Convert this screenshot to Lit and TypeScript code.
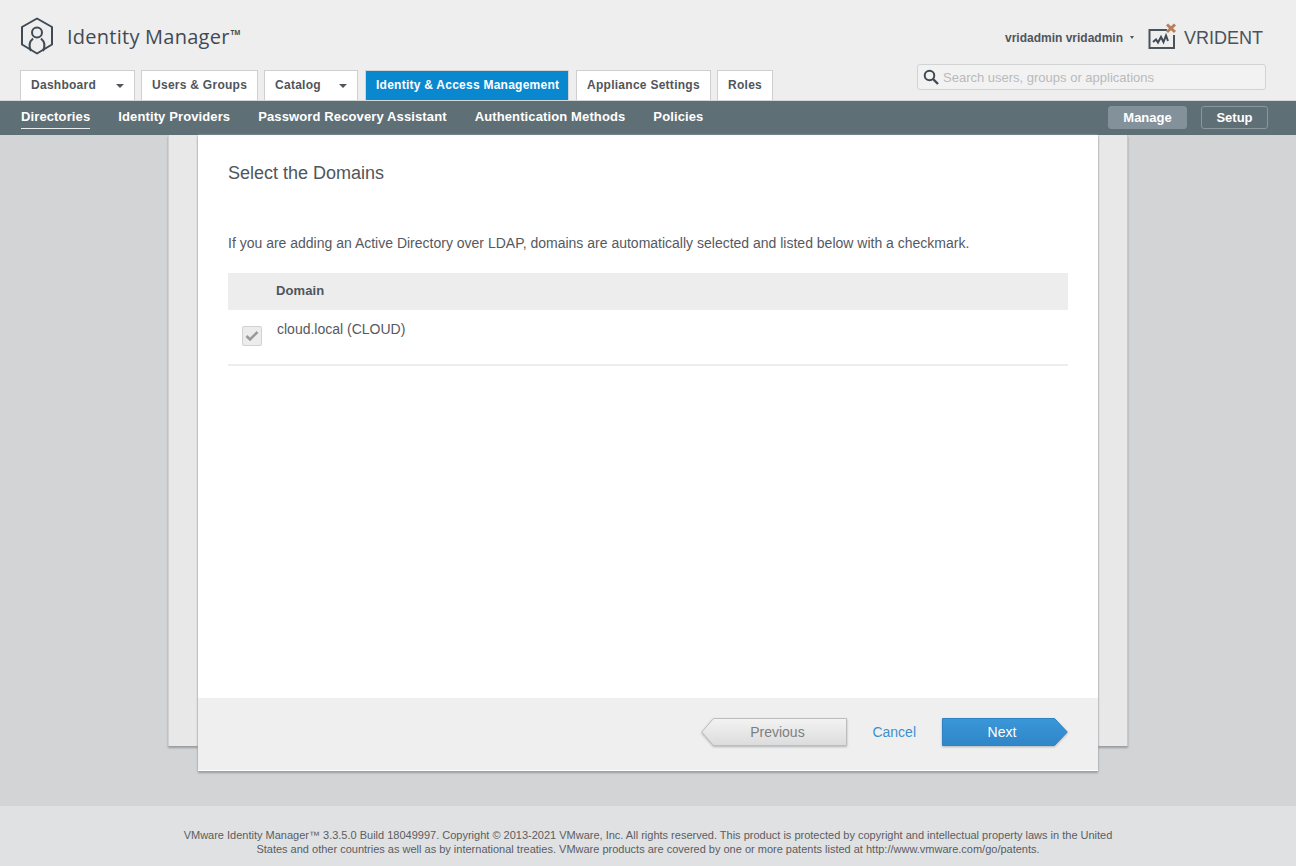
import { LitElement, html, css } from "lit";
import { customElement } from "lit/decorators.js";

@customElement("app-root")
export class AppRoot extends LitElement {
  static styles = css`
    :host { display: block; width: 1296px; height: 866px; overflow: hidden; font-family: "Liberation Sans", Arial, sans-serif; color: #4a4f57; background: #d3d4d6; }
    * { box-sizing: border-box; }
    .page { display: flex; flex-direction: column; height: 866px; }
    .header { height: 101px; flex: none; background: #eee; border-bottom: 1px solid #d4d6d7; display: flex; justify-content: space-between; padding: 0 30px 0 20px; }
    .left { display: flex; flex-direction: column; }
    .brand { height: 70px; display: flex; align-items: flex-start; padding-top: 17px; gap: 13px; }
    .brand svg { display: block; }
    .brand-name { font-family: "Open Sans", sans-serif; font-size: 20px; line-height: 38px; margin-top: 1px; color: #3f4a54; letter-spacing: 0.25px; font-weight: 400; }
    .brand-name sup { font-size: 6.5px; line-height: 0; vertical-align: 9px; letter-spacing: 0; font-weight: 700; margin-left: 1px; }
    .tabs { display: grid; grid-template-columns: 115px 117px 94px 206px 135px 56px; gap: 6px; }
    .tab { height: 30px; border: 1px solid #cfcfcf; border-bottom: none; background: #fff; display: flex; align-items: center; padding: 0 10px 1px; font-size: 12px; font-weight: bold; letter-spacing: 0.27px; color: #50555c; white-space: nowrap; }
    .tab.active { background: #0a88cf; border-color: #d0d4d6; color: #fff; letter-spacing: 0.25px; margin: 0 1px; }
    .caret { width: 0; height: 0; border-left: 4px solid transparent; border-right: 4px solid transparent; border-top: 4px solid #50555c; margin-left: auto; margin-top: 1px; }
    .right { display: flex; flex-direction: column; align-items: flex-end; width: 349px; }
    .user { height: 64px; display: flex; align-items: flex-start; padding-top: 21px; margin-right: 3px; }
    .user-name { font-size: 12px; font-weight: bold; color: #50555c; line-height: 34px; }
    .mini { width: 0; height: 0; border-left: 2.5px solid transparent; border-right: 2.5px solid transparent; border-top: 3px solid #50555c; margin: 15px 14px 0 7px; }
    .user svg { margin-top: 1px; }
    .vrident { font-size: 18px; line-height: 34px; color: #4a525b; margin-left: 7px; }
    .search { width: 349px; height: 26px; border: 1px solid #d2d3d4; border-radius: 3px; background: #f2f2f2; display: flex; align-items: center; padding-left: 5px; gap: 4px; font-size: 13px; color: #b9babb; }
    .subnav { height: 34px; flex: none; background: #5f6f76; display: flex; justify-content: space-between; align-items: center; padding: 0 28px 1px 21px; }
    .links { display: flex; gap: 28px; }
    .link { font-size: 13px; font-weight: bold; letter-spacing: 0.12px; color: #fff; line-height: 16px; padding-bottom: 3px; border-bottom: 1px solid transparent; margin-top: 3px; }
    .link.on { border-bottom-color: #e8ecee; }
    .subbtns { display: flex; gap: 14px; }
    .sb { height: 23px; border: 1px solid #8a989e; border-radius: 3px; color: #fff; font-size: 13px; font-weight: bold; display: flex; align-items: center; justify-content: center; }
    .sb.m { width: 79px; background: #83929a; border-color: #83929a; }
    .sb.s { width: 67px; }
    .main { flex: 1; display: grid; grid-template: 1fr / 1fr; min-height: 0; }
    .back { grid-area: 1 / 1; margin: 0 168px; height: 611px; background: #e8e8e8; border-left: 1px solid #cfd0d2; border-right: 1px solid #c6c7c9; box-shadow: 0 2px 2px #9a9ca0; }
    .modal { grid-area: 1 / 1; margin: 0 198px; height: 636px; padding-bottom: 1px; background: #fff; box-shadow: 0 0 2px #a5a7aa, 0 2px 2px #9a9ca0; display: flex; flex-direction: column; }
    .body { flex: 1; padding: 0 30px; display: flex; flex-direction: column; }
    h2 { margin: 28px 0 0; font-size: 18px; line-height: 20px; font-weight: normal; color: #50555c; }
    .desc { margin: 51px 0 0; font-size: 14px; line-height: 18px; color: #55595f; }
    .thead { margin-top: 21px; height: 37px; background: #ededed; display: flex; align-items: center; padding: 0 0 3px 48px; font-size: 13px; font-weight: bold; color: #50555c; letter-spacing: 0.1px; }
    .row { height: 56px; border-bottom: 2px solid #ededed; display: flex; align-items: flex-start; padding-left: 14px; gap: 15px; }
    .check { width: 20px; height: 20px; margin-top: 16px; border: 1px solid #d2d2d2; border-radius: 2px; background: #ececec; display: flex; align-items: center; justify-content: center; }
    .row span { font-size: 14px; line-height: 18px; margin-top: 10px; color: #55595f; }
    .foot { height: 72px; flex: none; background: #efefef; display: flex; justify-content: flex-end; align-items: flex-start; padding: 20px 30px 0 0; }
    .arrow { display: grid; height: 28px; font-size: 14px; }
    .arrow > * { grid-area: 1 / 1; }
    .arrow svg { overflow: visible; filter: drop-shadow(0 1px 1px #b0b2b4); }
    .arrow span { z-index: 1; display: flex; align-items: center; justify-content: center; }
    .prev { width: 146px; color: #7d7f80; margin-right: 25px; }
    .prev span { padding-left: 6px; }
    .next { width: 126px; color: #fff; margin-left: 26px; }
    .next span { padding-right: 6px; }
    .cancel { font-size: 14px; line-height: 28px; color: #3e8fcb; }
    .footer { height: 60px; flex: none; background: #e0e1e2; text-align: center; padding-top: 22px; font-size: 11px; line-height: 14px; color: #5a5d62; }
    .footer div { width: 940px; margin: 0 auto; }
  `;

  render() {
    const links = ["Directories", "Identity Providers", "Password Recovery Assistant", "Authentication Methods", "Policies"];
    return html`<div class="page">
      <div class="header">
        <div class="left">
          <div class="brand">
            <svg width="34" height="38" viewBox="0 0 34 38" fill="none" stroke="#3f4a54" stroke-width="2">
              <path d="M17 1.500 32 10V27.500L17 36.500 2 27.500V10Z" stroke-linejoin="round"/>
              <circle cx="17" cy="15.500" r="5"/>
              <path d="M11 34C9 30 9 25 13 21.500M21 21.500C25 25 25 30 23 34"/>
            </svg>
            <div class="brand-name">Identity Manager<sup>TM</sup></div>
          </div>
          <div class="tabs">
            <div class="tab">Dashboard<i class="caret"></i></div>
            <div class="tab">Users &amp; Groups</div>
            <div class="tab">Catalog<i class="caret"></i></div>
            <div class="tab active">Identity &amp; Access Management</div>
            <div class="tab">Appliance Settings</div>
            <div class="tab">Roles</div>
          </div>
        </div>
        <div class="right">
          <div class="user">
            <span class="user-name">vridadmin vridadmin</span><i class="mini"></i>
            <svg width="29" height="28" viewBox="0 0 29 28" fill="none">
              <path d="M19 8H1.500V26H26V13" stroke="#4a525b" stroke-width="2"/>
              <path d="M5 20 8 17.500 10 20.500 13 15 15.500 20 18 13.500 20 19" stroke="#3f4a54" stroke-width="2"/>
              <path d="M19 2.500 27 10M27 2.500 19 10" stroke="#b77f5e" stroke-width="3"/>
            </svg>
            <span class="vrident">VRIDENT</span>
          </div>
          <div class="search">
            <svg width="16" height="16" viewBox="0 0 16 16" fill="none" stroke="#3f4a54" stroke-width="2"><circle cx="6.500" cy="6.500" r="4.800"/><path d="M10 10 15 15" stroke-width="2.400"/></svg>
            <span>Search users, groups or applications</span>
          </div>
        </div>
      </div>
      <div class="subnav">
        <div class="links">${links.map((l, i) => html`<div class="link ${i === 0 ? "on" : ""}">${l}</div>`)}</div>
        <div class="subbtns"><div class="sb m">Manage</div><div class="sb s">Setup</div></div>
      </div>
      <div class="main">
        <div class="back"></div>
        <div class="modal">
          <div class="body">
            <h2>Select the Domains</h2>
            <p class="desc">If you are adding an Active Directory over LDAP, domains are automatically selected and listed below with a checkmark.</p>
            <div class="thead">Domain</div>
            <div class="row">
              <div class="check"><svg width="14" height="12" viewBox="0 0 14 12" fill="none" stroke="#9a9a9a" stroke-width="2.600"><path d="M1.500 6 5 9.500 12.500 2"/></svg></div>
              <span>cloud.local (CLOUD)</span>
            </div>
          </div>
          <div class="foot">
            <div class="arrow prev">
              <svg width="146" height="28" viewBox="0 0 146 28">
                <defs><linearGradient id="pg" x1="0" y1="0" x2="0" y2="1"><stop offset="0" stop-color="#f3f3f3"/><stop offset="1" stop-color="#dcdcdc"/></linearGradient></defs>
                <path d="M12.500 .5H145.500V27.500H12.500L.8 14Z" fill="url(#pg)" stroke="#bdbdbd"/>
              </svg>
              <span>Previous</span>
            </div>
            <div class="cancel">Cancel</div>
            <div class="arrow next">
              <svg width="126" height="28" viewBox="0 0 126 28">
                <defs><linearGradient id="ng" x1="0" y1="0" x2="0" y2="1"><stop offset="0" stop-color="#3a97d8"/><stop offset="1" stop-color="#2f86c8"/></linearGradient></defs>
                <path d="M.5 .5H112.500L125.300 14 112.500 27.500H.5Z" fill="url(#ng)" stroke="#2e83c3"/>
              </svg>
              <span>Next</span>
            </div>
          </div>
        </div>
      </div>
      <div class="footer">
        <div>VMware Identity Manager™ 3.3.5.0 Build 18049997. Copyright © 2013-2021 VMware, Inc. All rights reserved. This product is protected by copyright and intellectual property laws in the United States and other countries as well as by international treaties. VMware products are covered by one or more patents listed at http://www.vmware.com/go/patents.</div>
      </div>
    </div>`;
  }
}
